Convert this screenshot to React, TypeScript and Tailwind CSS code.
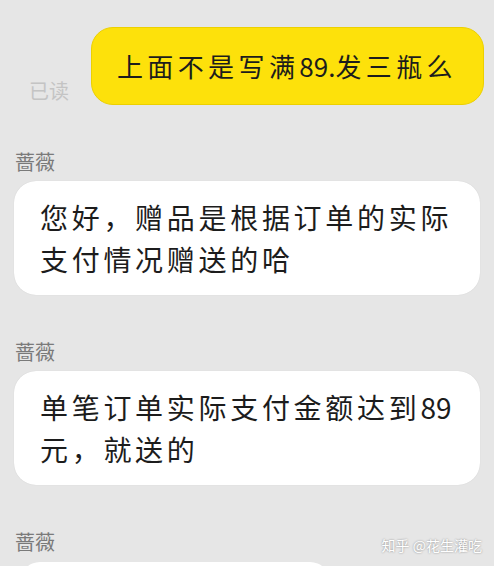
import React from "react";

const font = { fontFamily: '"Noto Sans CJK SC", "Noto Sans", sans-serif' };

function Name() {
  return (
    <div className="pl-[15px] text-[20px] leading-[24px] text-[#7a7a7a]">蔷薇</div>
  );
}

function WhiteBubble({ lines }: { lines: React.ReactNode[] }) {
  return (
    <div className="mx-[14px] mt-[7px] w-[466px] rounded-[22px] bg-white px-[26px] py-[15px] shadow-[0_0_1px_rgba(0,0,0,0.15)]">
      {lines.map((l, i) => (
        <div key={i} className="whitespace-nowrap text-[28px] leading-[42px] tracking-[3.7px] text-[#1c1c1c]">
          {l}
        </div>
      ))}
    </div>
  );
}

export default function App() {
  return (
    <div className="relative h-[566px] w-[494px] overflow-hidden bg-[#e6e6e6]" style={font}>
      <div className="flex items-end justify-end pr-[10px] pt-[27px]">
        <div className="mb-[2px] mr-[22px] text-[20px] leading-[24px] text-[#c4c4c4]">已读</div>
        <div className="rounded-[22px] border border-[#ecd000] bg-[#fde10b] py-[17px] pl-[25px] pr-[26px] whitespace-nowrap text-[26px] leading-[42px] tracking-[4.4px] text-[#1c1c1c]">
          上面不是写满<span className="tracking-[0px]">89.</span>发三瓶么
        </div>
      </div>
      <div className="mt-[45px]">
        <Name />
        <WhiteBubble lines={["您好，赠品是根据订单的实际", "支付情况赠送的哈"]} />
      </div>
      <div className="mt-[45px]">
        <Name />
        <WhiteBubble
          lines={[
            <>
              单笔订单实际支付金额达到<span className="tracking-[0px]">89</span>
            </>,
            "元，就送的",
          ]}
        />
      </div>
      <div className="mt-[45px]">
        <Name />
        <div className="ml-[20px] mt-[8px] h-[40px] w-[310px] rounded-[22px] bg-white" />
      </div>
      <div className="absolute right-[12px] top-[535px] text-[14px] leading-[20px] text-white [text-shadow:0_0_2px_rgba(0,0,0,0.45)]">
        知乎 @花生灌吃
      </div>
    </div>
  );
}
